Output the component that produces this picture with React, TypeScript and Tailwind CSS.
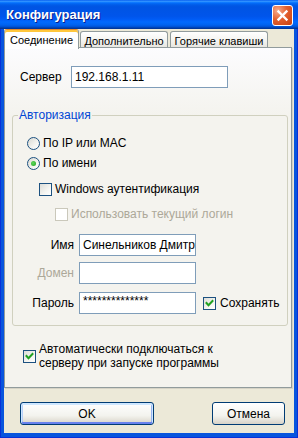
import type { ReactNode } from "react";

function CloseButton() {
  return (
    <div className="mt-[5px] self-start flex h-[21px] w-[21px] items-center justify-center rounded-[3px] border border-white bg-[radial-gradient(circle_at_25%_25%,#f6ad8f,#e3602f_45%,#c8400f)]">
      <svg width="13" height="13" viewBox="0 0 13 13">
        <path d="M2.5 2.5 L10.5 10.5 M10.5 2.5 L2.5 10.5" stroke="white" strokeWidth="2.4" strokeLinecap="square" />
      </svg>
    </div>
  );
}

function Radio({ checked }: { checked?: boolean }) {
  return (
    <span className="flex h-[13px] w-[13px] shrink-0 items-center justify-center rounded-full border border-[#1c5180] bg-[linear-gradient(135deg,#d8d8d2,#f4f4f0_60%,#ffffff)]">
      {checked && <span className="h-[5px] w-[5px] rounded-full bg-[radial-gradient(circle_at_40%_40%,#5fd85b,#21a121)]" />}
    </span>
  );
}

function Check({ checked, disabled }: { checked?: boolean; disabled?: boolean }) {
  return (
    <span
      className={
        disabled
          ? "flex h-[13px] w-[13px] shrink-0 items-center justify-center border border-[#cac8bb] bg-white"
          : "flex h-[13px] w-[13px] shrink-0 items-center justify-center border border-[#1c5180] bg-[linear-gradient(135deg,#dcdcd7,#f5f5f1_60%,#ffffff)]"
      }
    >
      {checked && (
        <svg width="11" height="11" viewBox="0 0 11 11">
          <polyline points="2.5,5 4.5,7.2 8.5,3" fill="none" stroke="#21a121" strokeWidth="2" strokeLinecap="square" />
        </svg>
      )}
    </span>
  );
}

function Field({ children, w }: { children?: ReactNode; w: string }) {
  return (
    <div className={`${w} h-[22px] shrink-0 overflow-hidden whitespace-nowrap border border-[#7f9db9] bg-white pl-[3px] leading-[20px]`}>
      {children}
    </div>
  );
}

export default function App() {
  return (
    <div className="flex h-[438px] w-[298px] flex-col border-x border-b border-[#0831d9] bg-[#0855dd] font-['Liberation_Sans',Arial,sans-serif] text-[12px] leading-[14px] text-black">
      {/* title bar */}
      <div className="-mx-px flex h-[29px] shrink-0 justify-between bg-[linear-gradient(to_bottom,#0058ee_0%,#3593ff_4%,#288eff_6%,#127dff_8%,#036ffc_10%,#0262ee_14%,#0057e5_20%,#0054e3_24%,#0055eb_56%,#005bf5_66%,#026afe_76%,#0062ef_86%,#0052d6_92%,#0040ab_96%,#003092_100%)] pl-[6px] pr-[5px]">
        <span className="self-center text-[13px] font-bold text-white [text-shadow:1px_1px_#0a1f8c]">Конфигурация</span>
        <CloseButton />
      </div>

      <div className="mx-[3px] mb-[4px] flex flex-1 flex-col bg-[#ece9d8]">
        {/* tabs */}
        <div className="relative z-10 flex h-[18px] items-start text-[11px]">
          <div className="flex h-[20px] w-[75px] items-center justify-center rounded-t-[3px] border-x border-t border-x-[#919b9c] border-t-[#e68b2c] bg-white shadow-[inset_0_2px_0_#ffc73c]">
            Соединение
          </div>
          <div className="ml-px mt-[2px] flex h-[16px] w-[88px] items-center justify-center rounded-t-[3px] border-x border-t border-[#919b9c] bg-[linear-gradient(to_bottom,#ffffff,#f3f3ef_60%,#e7e6e0)] pt-[2px]">
            Дополнительно
          </div>
          <div className="ml-[2px] mt-[2px] flex h-[16px] w-[98px] items-center justify-center rounded-t-[3px] border-x border-t border-[#919b9c] bg-[linear-gradient(to_bottom,#ffffff,#f3f3ef_60%,#e7e6e0)] pt-[2px]">
            Горячие клавиши
          </div>
        </div>

        {/* tab page */}
        <div className="flex h-[341px] w-[288px] flex-col border border-[#919b9c] bg-[linear-gradient(to_bottom,#fcfcfe,#f4f3ee_20%,#f4f3ee)] shadow-[1px_1px_0_#d6d3c6]">
          <div className="ml-[15px] mt-[18px] flex items-center">
            <span className="w-[51px]">Сервер</span>
            <Field w="w-[157px]">192.168.1.11</Field>
          </div>

          <fieldset className="ml-[7px] mt-[20px] w-[276px] rounded-[3px] border border-[#d0d0bf] p-0">
            <legend className="ml-[5px] px-[1px] leading-[14px] text-[#0046d5]">Авторизация</legend>
            <div className="flex flex-col pb-[11px] pl-[14px] pt-[13px]">
              <div className="flex h-[16px] items-center gap-[3px]">
                <Radio />
                <span>По IP или MAC</span>
              </div>
              <div className="mt-[4px] flex h-[16px] items-center gap-[3px]">
                <Radio checked />
                <span>По имени</span>
              </div>
              <div className="ml-[12px] mt-[10px] flex h-[16px] items-center gap-[3px]">
                <Check />
                <span>Windows аутентификация</span>
              </div>
              <div className="ml-[28px] mt-[9px] flex h-[16px] items-center gap-[3px] text-[#aca899]">
                <Check disabled />
                <span>Использовать текущий логин</span>
              </div>
              <div className="mt-[12px] flex items-center gap-[5px]">
                <span className="w-[47px] text-right">Имя</span>
                <Field w="w-[117px]">Синельников Дмитрий</Field>
              </div>
              <div className="mt-[6px] flex items-center gap-[5px]">
                <span className="w-[47px] text-right text-[#aca899]">Домен</span>
                <Field w="w-[117px]" />
              </div>
              <div className="mt-[8px] flex items-center gap-[5px]">
                <span className="w-[47px] text-right">Пароль</span>
                <Field w="w-[117px]">
                  <span className="relative top-[-2px]">**************</span>
                </Field>
                <span className="ml-[2px] flex items-center gap-[4px]">
                  <Check checked />
                  <span>Сохранять</span>
                </span>
              </div>
            </div>
          </fieldset>

          <div className="ml-[18px] mt-[16px] flex items-center gap-[3px]">
            <Check checked />
            <span>
              Автоматически подключаться к
              <br />
              серверу при запуске программы
            </span>
          </div>
        </div>

        {/* buttons */}
        <div className="mt-[14px] flex">
          <button className="ml-[16px] h-[23px] w-[134px] rounded-[3px] border border-[#003c74] bg-[linear-gradient(to_bottom,#ffffff,#f3f3ee_60%,#d8d3c8)] shadow-[inset_0_1px_0_1px_#cee7ff,inset_0_-1px_0_1px_#6982ee,inset_1px_0_0_1px_#b8d0f8,inset_-1px_0_0_1px_#98b4f0]">
            OK
          </button>
          <button className="ml-[58px] h-[23px] w-[73px] rounded-[3px] border border-[#003c74] bg-[linear-gradient(to_bottom,#ffffff,#f3f3ee_60%,#d8d3c8)]">
            Отмена
          </button>
        </div>
      </div>
    </div>
  );
}
